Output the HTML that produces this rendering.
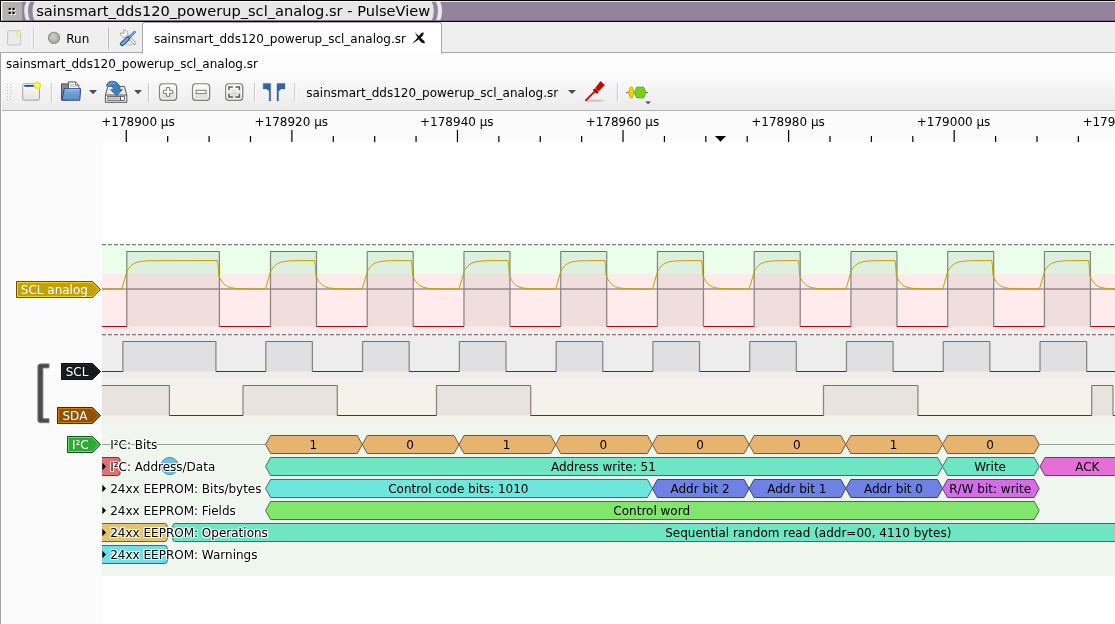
<!DOCTYPE html>
<html><head><meta charset="utf-8"><title>sainsmart_dds120_powerup_scl_analog.sr - PulseView</title>
<style>
html,body{margin:0;padding:0;}
body{width:1115px;height:624px;overflow:hidden;background:#fff;font-family:"DejaVu Sans","Liberation Sans",sans-serif;font-size:12px;color:#000;position:relative;}
.abs{position:absolute;}
#app{position:absolute;left:0;top:0;width:1115px;height:624px;overflow:hidden;will-change:transform;}
#titlebar{left:0;top:0;width:1115px;height:22px;background:#94839d;}
#title{left:36.2px;top:0;height:21px;line-height:21px;font-size:14.6px;white-space:nowrap;}
#tabrow{left:0;top:22px;width:1115px;height:30px;background:#efefef;border-bottom:1px solid #a9a9a9;}
#tab{left:142.3px;top:22px;width:299.6px;height:31.5px;background:#fff;border:1px solid #a9a9a9;border-bottom:none;border-radius:3px 3px 0 0;box-sizing:border-box;}
#main{left:0;top:53px;width:1115px;height:571px;background:#fcfcfc;}
#view{left:102px;top:142px;width:1013px;height:482px;background:#fff;}
#leftb{left:0;top:53px;width:1.3px;height:571px;background:#a3a3a3;}
#toolbar{left:2px;top:72px;width:1113px;height:38px;background:linear-gradient(#fcfcfc,#ebebeb);}
#tbline{left:2px;top:110px;width:1113px;height:1px;background:#b3b3b3;}
#ruler{left:2px;top:111px;width:1113px;height:31px;background:#fbfbfb;}
#hdr{left:2px;top:142px;width:100px;height:482px;background:#fbfbfb;}
.t{white-space:nowrap;line-height:16px;}
.rt{position:absolute;left:110.2px;white-space:nowrap;line-height:16px;height:16px;text-shadow:1px 1px 0 #fff,-1px 1px 0 #fff,1px -1px 0 #fff,-1px -1px 0 #fff;}
svg text{font-family:"DejaVu Sans","Liberation Sans",sans-serif;font-size:12px;fill:#000;}
</style></head><body>
<div id="app">
<div id="titlebar" class="abs"></div>
<div id="tabrow" class="abs"></div>
<div id="main" class="abs"></div>
<div id="tab" class="abs"></div>
<div id="toolbar" class="abs"></div>
<div id="tbline" class="abs"></div>
<div id="ruler" class="abs"></div>
<div id="hdr" class="abs"></div>
<div id="view" class="abs"></div>
<div id="leftb" class="abs"></div>
<svg class="abs" style="left:0;top:0" width="1115" height="23" viewBox="0 0 1115 23"><rect x="0" y="0" width="1115" height="22" fill="#94839d"/><path d="M26.9 0Q21.3 11 26.9 22H431.1Q436.5 11 431.1 0Z" fill="#e7e7e7"/><path d="M30.7 0Q25.3 11 30.7 22H35.2Q29.6 11 35.2 0Z" fill="#94839d"/><path d="M435.3 0Q440.7 11 435.3 22H439.6Q444.6 11 439.6 0Z" fill="#e7e7e7"/><rect x="1" y="1" width="1114" height="1" fill="#fff" fill-opacity=".75"/><rect x="1" y="1" width="21" height="20" fill="#fff"/><rect x="2.3" y="2" width="19.7" height="19" fill="#b4b2b0"/><rect x="9.7" y="8.9" width="2.1" height="2.1" fill="#fff"/><rect x="13.5" y="8.9" width="2.1" height="2.1" fill="#fff"/><rect x="9.7" y="12.9" width="2.1" height="2.1" fill="#fff"/><rect x="13.5" y="12.9" width="2.1" height="2.1" fill="#fff"/><rect x="8.7" y="7.9" width="2.1" height="2.1" fill="#000"/><rect x="12.5" y="7.9" width="2.1" height="2.1" fill="#000"/><rect x="8.7" y="11.9" width="2.1" height="2.1" fill="#000"/><rect x="12.5" y="11.9" width="2.1" height="2.1" fill="#000"/><rect x="22" y="20" width="1093" height="1" fill="#94839d" fill-opacity=".8"/><rect x="0" y="20.8" width="1115" height="1.2" fill="#000"/><rect x="0" y="0" width="1115" height="1" fill="#000"/><rect x="0" y="0" width="1" height="22" fill="#000"/></svg>
<div id="title" class="abs">sainsmart_dds120_powerup_scl_analog.sr - PulseView</div>
<div class="abs t" style="left:66.3px;top:30.5px">Run</div>
<div class="abs t" style="left:154px;top:31px">sainsmart_dds120_powerup_scl_analog.sr</div>
<div class="abs t" style="left:6px;top:55.5px">sainsmart_dds120_powerup_scl_analog.sr</div>
<div class="abs t" style="left:306.2px;top:85px">sainsmart_dds120_powerup_scl_analog.sr</div>
<svg class="abs" style="left:0;top:0" width="1115" height="624" viewBox="0 0 1115 624">
<defs><clipPath id="vc"><rect x="102" y="142" width="1013" height="482"/></clipPath></defs>
<g clip-path="url(#vc)">
<rect x="102" y="245" width="1013" height="29" fill="#ebffeb"/>
<rect x="102" y="274" width="1013" height="60.5" fill="#ffebeb"/>
<rect x="102" y="335" width="1013" height="43" fill="#ededed"/>
<rect x="102" y="378" width="1013" height="43.6" fill="#f6f1eb"/>
<rect x="102" y="421.6" width="1013" height="154.3" fill="#eef6ee"/>
<path d="M102 244.5H1115M102 334.5H1115" stroke="#000" stroke-opacity=".5" stroke-width="1.25" stroke-dasharray="4 2" fill="none"/>
<rect x="126.8" y="251.5" width="92.6" height="75.0" fill="#000" fill-opacity=".06"/>
<rect x="270.5" y="251.5" width="46" height="75.0" fill="#000" fill-opacity=".06"/>
<rect x="367.24" y="251.5" width="46" height="75.0" fill="#000" fill-opacity=".06"/>
<rect x="463.98" y="251.5" width="46" height="75.0" fill="#000" fill-opacity=".06"/>
<rect x="560.72" y="251.5" width="46" height="75.0" fill="#000" fill-opacity=".06"/>
<rect x="657.46" y="251.5" width="46" height="75.0" fill="#000" fill-opacity=".06"/>
<rect x="754.2" y="251.5" width="46" height="75.0" fill="#000" fill-opacity=".06"/>
<rect x="850.94" y="251.5" width="46" height="75.0" fill="#000" fill-opacity=".06"/>
<rect x="947.68" y="251.5" width="46" height="75.0" fill="#000" fill-opacity=".06"/>
<rect x="1044.42" y="251.5" width="46" height="75.0" fill="#000" fill-opacity=".06"/>
<path d="M102 289H1115" stroke="#000" stroke-opacity=".38" stroke-width="1.4" fill="none"/>
<path d="M126.8 251.5V326.5M219.4 251.5V326.5M270.5 251.5V326.5M316.5 251.5V326.5M367.24 251.5V326.5M413.24 251.5V326.5M463.98 251.5V326.5M509.98 251.5V326.5M560.72 251.5V326.5M606.72 251.5V326.5M657.46 251.5V326.5M703.46 251.5V326.5M754.2 251.5V326.5M800.2 251.5V326.5M850.94 251.5V326.5M896.94 251.5V326.5M947.68 251.5V326.5M993.68 251.5V326.5M1044.42 251.5V326.5M1090.42 251.5V326.5" stroke="#868686" stroke-width="1.25" fill="none"/>
<path d="M126.8 251.5H219.4M270.5 251.5H316.5M367.24 251.5H413.24M463.98 251.5H509.98M560.72 251.5H606.72M657.46 251.5H703.46M754.2 251.5H800.2M850.94 251.5H896.94M947.68 251.5H993.68M1044.42 251.5H1090.42" stroke="#00c000" stroke-width="1.15" fill="none"/>
<path d="M102 326.5H126.8M219.4 326.5H270.5M316.5 326.5H367.24M413.24 326.5H463.98M509.98 326.5H560.72M606.72 326.5H657.46M703.46 326.5H754.2M800.2 326.5H850.94M896.94 326.5H947.68M993.68 326.5H1044.42M1090.42 326.5H1115" stroke="#c00000" stroke-width="1.15" fill="none"/>
<path d="M102 289L121.5 289L122.5 286.8L126.8 271.7L127.8 269.82L128.8 268.26L129.8 266.97L130.8 265.89L131.8 265L132.8 264.25L134.8 263.12L136.8 262.34L138.8 261.8L141.8 261.29L145.8 260.93L150.8 260.73L217.5 260.6L218.2 266L218.8 275.6L219.9 278.11L220.9 279.98L221.9 281.53L223.4 283.37L224.9 284.76L226.4 285.81L228.4 286.81L231.4 287.76L234.4 288.29L239.4 288.73L244.4 288.89L249.4 289L265.2 289L266.2 286.8L270.5 271.7L271.5 269.82L272.5 268.26L273.5 266.97L274.5 265.89L275.5 265L276.5 264.25L278.5 263.12L280.5 262.34L282.5 261.8L285.5 261.29L289.5 260.93L294.5 260.73L314.6 260.6L315.3 266L315.9 275.6L317 278.11L318 279.98L319 281.53L320.5 283.37L322 284.76L323.5 285.81L325.5 286.81L328.5 287.76L331.5 288.29L336.5 288.73L341.5 288.89L346.5 289L361.94 289L362.94 286.8L367.24 271.7L368.24 269.82L369.24 268.26L370.24 266.97L371.24 265.89L372.24 265L373.24 264.25L375.24 263.12L377.24 262.34L379.24 261.8L382.24 261.29L386.24 260.93L391.24 260.73L411.34 260.6L412.04 266L412.64 275.6L413.74 278.11L414.74 279.98L415.74 281.53L417.24 283.37L418.74 284.76L420.24 285.81L422.24 286.81L425.24 287.76L428.24 288.29L433.24 288.73L438.24 288.89L443.24 289L458.68 289L459.68 286.8L463.98 271.7L464.98 269.82L465.98 268.26L466.98 266.97L467.98 265.89L468.98 265L469.98 264.25L471.98 263.12L473.98 262.34L475.98 261.8L478.98 261.29L482.98 260.93L487.98 260.73L508.08 260.6L508.78 266L509.38 275.6L510.48 278.11L511.48 279.98L512.48 281.53L513.98 283.37L515.48 284.76L516.98 285.81L518.98 286.81L521.98 287.76L524.98 288.29L529.98 288.73L534.98 288.89L539.98 289L555.42 289L556.42 286.8L560.72 271.7L561.72 269.82L562.72 268.26L563.72 266.97L564.72 265.89L565.72 265L566.72 264.25L568.72 263.12L570.72 262.34L572.72 261.8L575.72 261.29L579.72 260.93L584.72 260.73L604.82 260.6L605.52 266L606.12 275.6L607.22 278.11L608.22 279.98L609.22 281.53L610.72 283.37L612.22 284.76L613.72 285.81L615.72 286.81L618.72 287.76L621.72 288.29L626.72 288.73L631.72 288.89L636.72 289L652.16 289L653.16 286.8L657.46 271.7L658.46 269.82L659.46 268.26L660.46 266.97L661.46 265.89L662.46 265L663.46 264.25L665.46 263.12L667.46 262.34L669.46 261.8L672.46 261.29L676.46 260.93L681.46 260.73L701.56 260.6L702.26 266L702.86 275.6L703.96 278.11L704.96 279.98L705.96 281.53L707.46 283.37L708.96 284.76L710.46 285.81L712.46 286.81L715.46 287.76L718.46 288.29L723.46 288.73L728.46 288.89L733.46 289L748.9 289L749.9 286.8L754.2 271.7L755.2 269.82L756.2 268.26L757.2 266.97L758.2 265.89L759.2 265L760.2 264.25L762.2 263.12L764.2 262.34L766.2 261.8L769.2 261.29L773.2 260.93L778.2 260.73L798.3 260.6L799 266L799.6 275.6L800.7 278.11L801.7 279.98L802.7 281.53L804.2 283.37L805.7 284.76L807.2 285.81L809.2 286.81L812.2 287.76L815.2 288.29L820.2 288.73L825.2 288.89L830.2 289L845.64 289L846.64 286.8L850.94 271.7L851.94 269.82L852.94 268.26L853.94 266.97L854.94 265.89L855.94 265L856.94 264.25L858.94 263.12L860.94 262.34L862.94 261.8L865.94 261.29L869.94 260.93L874.94 260.73L895.04 260.6L895.74 266L896.34 275.6L897.44 278.11L898.44 279.98L899.44 281.53L900.94 283.37L902.44 284.76L903.94 285.81L905.94 286.81L908.94 287.76L911.94 288.29L916.94 288.73L921.94 288.89L926.94 289L942.38 289L943.38 286.8L947.68 271.7L948.68 269.82L949.68 268.26L950.68 266.97L951.68 265.89L952.68 265L953.68 264.25L955.68 263.12L957.68 262.34L959.68 261.8L962.68 261.29L966.68 260.93L971.68 260.73L991.78 260.6L992.48 266L993.08 275.6L994.18 278.11L995.18 279.98L996.18 281.53L997.68 283.37L999.18 284.76L1000.68 285.81L1002.68 286.81L1005.68 287.76L1008.68 288.29L1013.68 288.73L1018.68 288.89L1023.68 289L1039.12 289L1040.12 286.8L1044.42 271.7L1045.42 269.82L1046.42 268.26L1047.42 266.97L1048.42 265.89L1049.42 265L1050.42 264.25L1052.42 263.12L1054.42 262.34L1056.42 261.8L1059.42 261.29L1063.42 260.93L1068.42 260.73L1088.52 260.6L1089.22 266L1089.82 275.6L1090.92 278.11L1091.92 279.98L1092.92 281.53L1094.42 283.37L1095.92 284.76L1097.42 285.81L1099.42 286.81L1102.42 287.76L1105.42 288.29L1110.42 288.73L1115.42 288.89L1120.42 289" stroke="#c4a000" stroke-width="1" fill="none" stroke-linejoin="round"/>
<rect x="122.9" y="341.5" width="93" height="30.0" fill="#000" fill-opacity=".055"/>
<rect x="265.8" y="341.5" width="46.6" height="30.0" fill="#000" fill-opacity=".055"/>
<rect x="362.58" y="341.5" width="46.6" height="30.0" fill="#000" fill-opacity=".055"/>
<rect x="459.36" y="341.5" width="46.6" height="30.0" fill="#000" fill-opacity=".055"/>
<rect x="556.14" y="341.5" width="46.6" height="30.0" fill="#000" fill-opacity=".055"/>
<rect x="652.92" y="341.5" width="46.6" height="30.0" fill="#000" fill-opacity=".055"/>
<rect x="749.7" y="341.5" width="46.6" height="30.0" fill="#000" fill-opacity=".055"/>
<rect x="846.48" y="341.5" width="46.6" height="30.0" fill="#000" fill-opacity=".055"/>
<rect x="943.26" y="341.5" width="46.6" height="30.0" fill="#000" fill-opacity=".055"/>
<rect x="1040.04" y="341.5" width="46.6" height="30.0" fill="#000" fill-opacity=".055"/>
<path d="M122.9 341.5V371.5M215.9 341.5V371.5M265.8 341.5V371.5M312.4 341.5V371.5M362.58 341.5V371.5M409.18 341.5V371.5M459.36 341.5V371.5M505.96 341.5V371.5M556.14 341.5V371.5M602.74 341.5V371.5M652.92 341.5V371.5M699.52 341.5V371.5M749.7 341.5V371.5M796.3 341.5V371.5M846.48 341.5V371.5M893.08 341.5V371.5M943.26 341.5V371.5M989.86 341.5V371.5M1040.04 341.5V371.5M1086.64 341.5V371.5" stroke="#868686" stroke-width="1.25" fill="none"/>
<path d="M122.9 341.5H215.9M265.8 341.5H312.4M362.58 341.5H409.18M459.36 341.5H505.96M556.14 341.5H602.74M652.92 341.5H699.52M749.7 341.5H796.3M846.48 341.5H893.08M943.26 341.5H989.86M1040.04 341.5H1086.64" stroke="#00c000" stroke-width="1.15" fill="none"/>
<path d="M102 371.5H122.9M215.9 371.5H265.8M312.4 371.5H362.58M409.18 371.5H459.36M505.96 371.5H556.14M602.74 371.5H652.92M699.52 371.5H749.7M796.3 371.5H846.48M893.08 371.5H943.26M989.86 371.5H1040.04M1086.64 371.5H1115" stroke="#c00000" stroke-width="1.15" fill="none"/>
<rect x="102" y="385.5" width="67.4" height="30.0" fill="#000" fill-opacity=".055"/>
<rect x="243" y="385.5" width="94.3" height="30.0" fill="#000" fill-opacity=".055"/>
<rect x="436.5" y="385.5" width="94.2" height="30.0" fill="#000" fill-opacity=".055"/>
<rect x="823.5" y="385.5" width="94.4" height="30.0" fill="#000" fill-opacity=".055"/>
<rect x="1091.7" y="385.5" width="21.3" height="30.0" fill="#000" fill-opacity=".055"/>
<path d="M169.4 385.5V415.5M243 385.5V415.5M337.3 385.5V415.5M436.5 385.5V415.5M530.7 385.5V415.5M823.5 385.5V415.5M917.9 385.5V415.5M1091.7 385.5V415.5M1113 385.5V415.5" stroke="#868686" stroke-width="1.25" fill="none"/>
<path d="M102 385.5H169.4M243 385.5H337.3M436.5 385.5H530.7M823.5 385.5H917.9M1091.7 385.5H1113" stroke="#00c000" stroke-width="1.15" fill="none"/>
<path d="M169.4 415.5H243M337.3 415.5H436.5M530.7 415.5H823.5M917.9 415.5H1091.7M1113 415.5H1115" stroke="#c00000" stroke-width="1.15" fill="none"/>
<path d="M102 444.5H1115" stroke="#000" stroke-opacity=".35" stroke-width="1" fill="none"/>
<path d="M270.6 453.5L265.6 444.5L270.6 435.5H357.3L362.3 444.5L357.3 453.5Z" fill="#e6b46e" stroke="#735a37" stroke-width="1" stroke-linejoin="round"/>
<text x="313.25" y="448.9" text-anchor="middle">1</text>
<path d="M367.3 453.5L362.3 444.5L367.3 435.5H454L459 444.5L454 453.5Z" fill="#e6b46e" stroke="#735a37" stroke-width="1" stroke-linejoin="round"/>
<text x="409.95" y="448.9" text-anchor="middle">0</text>
<path d="M464 453.5L459 444.5L464 435.5H550.7L555.7 444.5L550.7 453.5Z" fill="#e6b46e" stroke="#735a37" stroke-width="1" stroke-linejoin="round"/>
<text x="506.65" y="448.9" text-anchor="middle">1</text>
<path d="M560.7 453.5L555.7 444.5L560.7 435.5H647.4L652.4 444.5L647.4 453.5Z" fill="#e6b46e" stroke="#735a37" stroke-width="1" stroke-linejoin="round"/>
<text x="603.35" y="448.9" text-anchor="middle">0</text>
<path d="M657.4 453.5L652.4 444.5L657.4 435.5H744.1L749.1 444.5L744.1 453.5Z" fill="#e6b46e" stroke="#735a37" stroke-width="1" stroke-linejoin="round"/>
<text x="700.05" y="448.9" text-anchor="middle">0</text>
<path d="M754.1 453.5L749.1 444.5L754.1 435.5H840.8L845.8 444.5L840.8 453.5Z" fill="#e6b46e" stroke="#735a37" stroke-width="1" stroke-linejoin="round"/>
<text x="796.75" y="448.9" text-anchor="middle">0</text>
<path d="M850.8 453.5L845.8 444.5L850.8 435.5H937.5L942.5 444.5L937.5 453.5Z" fill="#e6b46e" stroke="#735a37" stroke-width="1" stroke-linejoin="round"/>
<text x="893.45" y="448.9" text-anchor="middle">1</text>
<path d="M947.5 453.5L942.5 444.5L947.5 435.5H1034.2L1039.2 444.5L1034.2 453.5Z" fill="#e6b46e" stroke="#735a37" stroke-width="1" stroke-linejoin="round"/>
<text x="990.15" y="448.9" text-anchor="middle">0</text>
<path d="M270.6 475.5L265.6 466.5L270.6 457.5H937.5L942.5 466.5L937.5 475.5Z" fill="#6ee6c3" stroke="#377361" stroke-width="1" stroke-linejoin="round"/>
<text x="603.35" y="470.9" text-anchor="middle">Address write: 51</text>
<path d="M947.5 475.5L942.5 466.5L947.5 457.5H1034.2L1039.2 466.5L1034.2 475.5Z" fill="#6ee6c3" stroke="#377361" stroke-width="1" stroke-linejoin="round"/>
<text x="990.15" y="470.9" text-anchor="middle">Write</text>
<path d="M1045 475.5L1040 466.5L1045 457.5H1130L1135 466.5L1130 475.5Z" fill="#e66ed7" stroke="#73376b" stroke-width="1" stroke-linejoin="round"/>
<text x="1087.3" y="470.9" text-anchor="middle">ACK</text>
<path d="M97 475.5L92 466.5L97 457.5H117.8Q120.2 457.5 120.2 460.9V472.1Q120.2 475.5 117.8 475.5Z" fill="#e66e73" stroke="#733739" stroke-width="1" stroke-linejoin="round"/>
<path d="M270.6 497.5L265.6 488.5L270.6 479.5H647.4L652.4 488.5L647.4 497.5Z" fill="#6ee6dc" stroke="#37736e" stroke-width="1" stroke-linejoin="round"/>
<text x="458.3" y="492.9" text-anchor="middle">Control code bits: 1010</text>
<path d="M657.4 497.5L652.4 488.5L657.4 479.5H744.1L749.1 488.5L744.1 497.5Z" fill="#6e82e6" stroke="#374173" stroke-width="1" stroke-linejoin="round"/>
<text x="700.05" y="492.9" text-anchor="middle">Addr bit 2</text>
<path d="M754.1 497.5L749.1 488.5L754.1 479.5H840.8L845.8 488.5L840.8 497.5Z" fill="#6e82e6" stroke="#374173" stroke-width="1" stroke-linejoin="round"/>
<text x="796.75" y="492.9" text-anchor="middle">Addr bit 1</text>
<path d="M850.8 497.5L845.8 488.5L850.8 479.5H937.5L942.5 488.5L937.5 497.5Z" fill="#6e82e6" stroke="#374173" stroke-width="1" stroke-linejoin="round"/>
<text x="893.45" y="492.9" text-anchor="middle">Addr bit 0</text>
<path d="M947.5 497.5L942.5 488.5L947.5 479.5H1034.2L1039.2 488.5L1034.2 497.5Z" fill="#d26ee6" stroke="#693773" stroke-width="1" stroke-linejoin="round"/>
<text x="990.15" y="492.9" text-anchor="middle">R/W bit: write</text>
<path d="M270.6 519.5L265.6 510.5L270.6 501.5H1034.2L1039.2 510.5L1034.2 519.5Z" fill="#82e66e" stroke="#417337" stroke-width="1" stroke-linejoin="round"/>
<text x="651.7" y="514.9" text-anchor="middle">Control word</text>
<path d="M97 541.5L92 532.5L97 523.5H164.9Q167.3 523.5 167.3 526.9V538.1Q167.3 541.5 164.9 541.5Z" fill="#e6c46e" stroke="#736237" stroke-width="1" stroke-linejoin="round"/>
<path d="M172.6 538.1V526.9Q172.6 523.5 175 523.5H1130L1135 532.5L1130 541.5H175Q172.6 541.5 172.6 538.1Z" fill="#6ee6c3" stroke="#377361" stroke-width="1" stroke-linejoin="round"/>
<text x="808.3" y="536.9" text-anchor="middle">Sequential random read (addr=00, 4110 bytes)</text>
<path d="M97 563.5L92 554.5L97 545.5H164.9Q167.3 545.5 167.3 548.9V560.1Q167.3 563.5 164.9 563.5Z" fill="#6edfe6" stroke="#376f73" stroke-width="1" stroke-linejoin="round"/>
<circle cx="169.7" cy="466" r="8.6" fill="#6ebfe6" stroke="#4b8fb3" stroke-width="1"/>
<path d="M102.3 462.8L106 466.5L102.3 470.2Z" fill="#000"/><path d="M102.3 484.8L106 488.5L102.3 492.2Z" fill="#000"/><path d="M102.3 506.8L106 510.5L102.3 514.2Z" fill="#000"/><path d="M102.3 528.8L106 532.5L102.3 536.2Z" fill="#000"/><path d="M102.3 550.8L106 554.5L102.3 558.2Z" fill="#000"/>
</g>
<path d="M126.3 130V142M167.69 136V142M209.09 136V142M250.49 136V142M291.88 130V142M333.27 136V142M374.67 136V142M416.06 136V142M457.46 130V142M498.86 136V142M540.25 136V142M581.64 136V142M623.04 130V142M664.43 136V142M705.83 136V142M747.22 136V142M788.62 130V142M830.01 136V142M871.41 136V142M912.81 136V142M954.2 130V142M995.6 136V142M1036.99 136V142M1078.38 136V142" stroke="#000" stroke-width="1.2" fill="none"/>
<path d="M715 136H726L720.5 141.7Z" fill="#000"/>
<text x="101.2" y="125.6">+178900 µs</text><text x="254.48" y="125.6">+178920 µs</text><text x="420.06" y="125.6">+178940 µs</text><text x="585.64" y="125.6">+178960 µs</text><text x="751.22" y="125.6">+178980 µs</text><text x="916.8" y="125.6">+179000 µs</text><text x="1082.38" y="125.6">+179020 µs</text>
<defs><linearGradient id="gb" x1="0" y1="0" x2="0" y2="1"><stop offset="0" stop-color="#fdfdfd"/><stop offset=".5" stop-color="#f1f1f1"/><stop offset=".55" stop-color="#e6e6e6"/><stop offset="1" stop-color="#dadada"/></linearGradient><linearGradient id="gn" x1="0" y1="0" x2="0" y2="1"><stop offset="0" stop-color="#ffffff"/><stop offset="1" stop-color="#e2e2e2"/></linearGradient><linearGradient id="gf" x1="0" y1="0" x2="0" y2="1"><stop offset="0" stop-color="#7fa9dc"/><stop offset="1" stop-color="#5b8dcb"/></linearGradient><radialGradient id="gr" cx=".45" cy=".4" r=".6"><stop offset="0" stop-color="#d2d2cd"/><stop offset="1" stop-color="#a4a49f"/></radialGradient><radialGradient id="gy"><stop offset="0" stop-color="#fff"/><stop offset=".14" stop-color="#fffbd0"/><stop offset=".4" stop-color="#f3ea3c"/><stop offset=".82" stop-color="#f0e636"/><stop offset="1" stop-color="#f0e636" stop-opacity="0"/></radialGradient><radialGradient id="gy2"><stop offset="0" stop-color="#fff"/><stop offset=".2" stop-color="#fbf8d0"/><stop offset=".5" stop-color="#ece584"/><stop offset=".8" stop-color="#ebe58a"/><stop offset="1" stop-color="#ebe58a" stop-opacity="0"/></radialGradient></defs><rect x="7.6" y="30.8" width="13" height="14.2" rx="1.6" fill="#ebebeb" stroke="#c6c6c6" stroke-width="1.1"/><circle cx="19" cy="33.2" r="2.9" fill="url(#gy2)"/><path d="M33.2 27.5V49" stroke="#a5a5a5" stroke-width="1.1"/><path d="M32.2 27.5V49M34.2 27.5V49" stroke="#fbfbfb" stroke-width="1"/><path d="M108.4 27.5V49" stroke="#a5a5a5" stroke-width="1.1"/><path d="M107.4 27.5V49M109.4 27.5V49" stroke="#fbfbfb" stroke-width="1"/><circle cx="54" cy="37.9" r="5.6" fill="url(#gr)" stroke="#8d8d88" stroke-width="1.1"/><path d="M134.6 43L126 34.6" stroke="#a8a8a8" stroke-width="3.3" stroke-linecap="round" fill="none"/><path d="M134.6 43L126 34.6" stroke="#f4f4f4" stroke-width="1.6" stroke-linecap="round" fill="none"/><path d="M120.56 32.96L123.78 33.18L123.56 29.96A3.7 3.7 0 1 1 120.56 32.96Z" fill="#f4f4f4" stroke="#a2a2a2" stroke-width=".95" stroke-linejoin="round"/><ellipse cx="130" cy="44.6" rx="5" ry="1.1" fill="#000" fill-opacity=".12"/><path d="M128.6 38.2L134.6 32.2" stroke="#4a78ba" stroke-width="2.6" stroke-linecap="round" fill="none"/><path d="M129 37.8L134.4 32.4" stroke="#c4d6ee" stroke-width="1" stroke-linecap="round" stroke-dasharray="1.3 .9" fill="none"/><path d="M122.2 43.9L127.8 38.6" stroke="#2a5aa0" stroke-width="4.6" stroke-linecap="round" fill="none"/><path d="M122.4 43.7L127.6 38.8" stroke="#8fa9cf" stroke-width="2.2" stroke-linecap="round" fill="none"/><path d="M423.3 32.2Q424.5 33.8 422 36.4Q417.3 40.9 412.1 43.7Q416.2 39.5 419.2 35.5Q421.2 32.5 423.3 32.2Z" fill="#111"/><path d="M414.9 32.3Q418.6 36.2 421.5 38.6Q424.6 40.7 424.9 43Q423.5 43.8 421.1 42.2Q418.3 39.6 414.9 32.3Z" fill="#111"/><rect x="6.9" y="84" width="1" height="1" fill="#bdbdbd"/><rect x="10.1" y="84" width="1" height="1" fill="#bdbdbd"/><rect x="6.9" y="87" width="1" height="1" fill="#bdbdbd"/><rect x="10.1" y="87" width="1" height="1" fill="#bdbdbd"/><rect x="6.9" y="90" width="1" height="1" fill="#bdbdbd"/><rect x="10.1" y="90" width="1" height="1" fill="#bdbdbd"/><rect x="6.9" y="93" width="1" height="1" fill="#bdbdbd"/><rect x="10.1" y="93" width="1" height="1" fill="#bdbdbd"/><rect x="6.9" y="96" width="1" height="1" fill="#bdbdbd"/><rect x="10.1" y="96" width="1" height="1" fill="#bdbdbd"/><rect x="6.9" y="99" width="1" height="1" fill="#bdbdbd"/><rect x="10.1" y="99" width="1" height="1" fill="#bdbdbd"/><rect x="22.7" y="83.7" width="16.8" height="16.5" rx="1.6" fill="url(#gn)" stroke="#a3a39d" stroke-width="1"/><rect x="24.3" y="85" width="11.5" height="1.8" fill="#204a87"/><circle cx="37.5" cy="85.5" r="4.3" fill="url(#gy)"/><path d="M51.4 83V101.8" stroke="#c3c3c3" stroke-width="1"/><path d="M52.4 83V101.8" stroke="#fff" stroke-width="1"/><path d="M61.5 83.9H68.5V100H61.5Z" fill="#8b8b8b" stroke="#4f4f4f" stroke-width="1"/><path d="M68.4 81.9H75.6L78.8 85.2V90H68.4Z" fill="#fbfbfb" stroke="#555" stroke-width="1"/><path d="M75.6 81.9V85.2H78.8" fill="#ddd" stroke="#555" stroke-width=".8"/><path d="M70 84.3H74M70 86.3H76.5" stroke="#aaa" stroke-width=".9"/><path d="M64.2 88.7H80.6L79.8 100.2H62Z" fill="url(#gf)" stroke="#204a87" stroke-width="1" stroke-linejoin="round"/><path d="M65 89.8H79.6" stroke="#a9c6ea" stroke-width="1" fill="none"/><path d="M89 90.1H97.1L93.05 94.2Z" fill="#4d4d4d"/><path d="M107.9 86.4H124.3L126.8 95V102.3H105.4V95Z" fill="#ececec" stroke="#555" stroke-width="1" stroke-linejoin="round"/><path d="M105.6 95H126.6" stroke="#555" stroke-width="1"/><rect x="107.9" y="96.4" width="16.4" height="3.9" fill="#fff" stroke="#555" stroke-width=".9"/><rect x="108.8" y="97.3" width="10.6" height="2.1" fill="#b5b5b5"/><path d="M120.4 96.4V100.3" stroke="#444" stroke-width="1"/><path d="M106.6 86.2Q106.6 81.8 111.6 81.3Q117.6 81 119.8 86.6L120 89.7H122.4L116.6 95.6L110.6 89.7H113.4Q113.4 86 110.6 85.2Q108 84.8 106.6 86.2Z" fill="#3f7fbe" stroke="#2c5f98" stroke-width=".9" stroke-linejoin="round"/><path d="M108 84.4Q111 82.2 114.6 83.4" stroke="#8db7e0" stroke-width="1" fill="none"/><path d="M134.1 90.1H142L138.05 94.2Z" fill="#4d4d4d"/><path d="M148.6 83V101.8" stroke="#c3c3c3" stroke-width="1"/><path d="M149.6 83V101.8" stroke="#fff" stroke-width="1"/><rect x="159.4" y="84.7" width="17.4" height="16.4" rx="3.4" fill="#000" fill-opacity=".13"/><rect x="159.6" y="83.8" width="17" height="16.4" rx="3.2" fill="url(#gb)" stroke="#83837d" stroke-width="1.35"/><rect x="160.8" y="85" width="14.6" height="13.999999999999998" rx="2.1" fill="none" stroke="#fff" stroke-opacity=".85" stroke-width="1"/><path d="M166.6 87.5H169.6V90.3H172.8V93.3H169.6V96.3H166.6V93.3H163.4V90.3H166.6Z" fill="#fff" stroke="#7a7a76" stroke-width="1" stroke-linejoin="round"/><rect x="192.4" y="84.7" width="17.4" height="16.4" rx="3.4" fill="#000" fill-opacity=".13"/><rect x="192.6" y="83.8" width="17" height="16.4" rx="3.2" fill="url(#gb)" stroke="#83837d" stroke-width="1.35"/><rect x="193.8" y="85" width="14.6" height="13.999999999999998" rx="2.1" fill="none" stroke="#fff" stroke-opacity=".85" stroke-width="1"/><rect x="196.2" y="90.3" width="9.8" height="3.1" fill="#fff" stroke="#7a7a76" stroke-width="1"/><rect x="225.5" y="84.7" width="17.4" height="16.4" rx="3.4" fill="#000" fill-opacity=".13"/><rect x="225.7" y="83.8" width="17" height="16.4" rx="3.2" fill="url(#gb)" stroke="#83837d" stroke-width="1.35"/><rect x="226.9" y="85" width="14.6" height="13.999999999999998" rx="2.1" fill="none" stroke="#fff" stroke-opacity=".85" stroke-width="1"/><circle cx="234.2" cy="92" r="3" fill="#000" fill-opacity=".06"/><path d="M228.9 90.3V87H232.9M235.5 87H239.4V90.3M239.4 93.7V97H235.5M232.9 97H228.9V93.7" fill="none" stroke="#5e5e5a" stroke-width="1.5"/><path d="M254.6 83V101.8" stroke="#c3c3c3" stroke-width="1"/><path d="M255.6 83V101.8" stroke="#fff" stroke-width="1"/><path d="M263.2 83.4H270.7V100.9H269.2V91.2L266.6 88.9H263.2Z" fill="#3465a4" stroke="#204a87" stroke-width=".3" stroke-linejoin="round"/><path d="M285 83.4H277V100.9H278.5V91.2L281.1 88.9H285Z" fill="#3465a4" stroke="#204a87" stroke-width=".3" stroke-linejoin="round"/><path d="M294.8 83V101.8" stroke="#c3c3c3" stroke-width="1"/><path d="M295.8 83V101.8" stroke="#fff" stroke-width="1"/><path d="M567.9 90H576.1L572 94Z" fill="#4d4d4d"/><ellipse cx="595" cy="100.7" rx="9" ry="1.3" fill="#000" fill-opacity=".16"/><path d="M585.4 100.9L594.5 91.6" stroke="#cc0000" stroke-width="1.7" fill="none"/><path d="M593 90.6L595.4 88.2L598.4 91.4L596.2 93.6Z" fill="#cc0000"/><path d="M595.2 88L600.6 81L604.8 84.9L598.6 91.4Z" fill="#cc0000"/><path d="M593.6 89L597.8 93.2" stroke="#a40000" stroke-width="1.6"/><path d="M617.4 83V101.8" stroke="#c3c3c3" stroke-width="1"/><path d="M618.4 83V101.8" stroke="#fff" stroke-width="1"/><path d="M625.9 92.6H648" stroke="#666" stroke-width="1"/><path d="M628.3 92.5L630.3 87.2H632.4L634.4 92.5L632.4 97.8H630.3Z" fill="#edd400" stroke="#c4a000" stroke-width=".8" stroke-linejoin="round"/><path d="M634.4 92.5L636.7 87.2H643.7L645.9 92.5L643.7 97.8H636.7Z" fill="#73d216" stroke="#4e9a06" stroke-width=".8" stroke-linejoin="round"/><path d="M645.2 101.4H651L648.1 104.2Z" fill="#4d4d4d"/>
<polygon points="16.5,281.5 92.5,281.5 100.5,289.5 92.5,297.5 16.5,297.5" fill="#c4a000"/><polygon points="17.5,282.5 92.1,282.5 99.1,289.5 92.1,296.5 17.5,296.5" fill="none" stroke="#f2d31b" stroke-width="1"/><polygon points="16.5,281.5 92.5,281.5 100.5,289.5 92.5,297.5 16.5,297.5" fill="none" stroke="#625000" stroke-width="1"/><text x="20.8" y="293.7" style="fill:#fff">SCL analog</text><polygon points="61.5,363.5 92.5,363.5 100.5,371.5 92.5,379.5 61.5,379.5" fill="#16191a"/><polygon points="62.5,364.5 92.1,364.5 99.1,371.5 92.1,378.5 62.5,378.5" fill="none" stroke="#23282a" stroke-width="1"/><polygon points="61.5,363.5 92.5,363.5 100.5,371.5 92.5,379.5 61.5,379.5" fill="none" stroke="#0b0c0d" stroke-width="1"/><text x="65.7" y="376" style="fill:#fff">SCL</text><polygon points="57.5,407.5 92.5,407.5 100.5,415.5 92.5,423.5 57.5,423.5" fill="#8f5202"/><polygon points="58.5,408.5 92.1,408.5 99.1,415.5 92.1,422.5 58.5,422.5" fill="none" stroke="#d67b03" stroke-width="1"/><polygon points="57.5,407.5 92.5,407.5 100.5,415.5 92.5,423.5 57.5,423.5" fill="none" stroke="#472901" stroke-width="1"/><text x="62.5" y="419.7" style="fill:#fff">SDA</text><polygon points="67.5,436.5 92.5,436.5 100.5,444.5 92.5,452.5 67.5,452.5" fill="#30a838"/><polygon points="68.5,437.5 92.1,437.5 99.1,444.5 92.1,451.5 68.5,451.5" fill="none" stroke="#5ae666" stroke-width="1"/><polygon points="67.5,436.5 92.5,436.5 100.5,444.5 92.5,452.5 67.5,452.5" fill="none" stroke="#18541c" stroke-width="1"/><text x="72" y="448.7" style="fill:#fff">I²C</text><path d="M49 363.9H40.4Q37.9 363.9 37.9 366.4V420.2Q37.9 422.7 40.4 422.7H49V418.7H42.9V367.9H49Z" fill="#4a4a4a" stroke="#7d7d7d" stroke-width="1" stroke-linejoin="round"/>
</svg>
<div class="rt" style="top:436.5px">I²C: Bits</div>
<div class="rt" style="top:458.5px">I²C: Address/Data</div>
<div class="rt" style="top:480.5px">24xx EEPROM: Bits/bytes</div>
<div class="rt" style="top:502.5px">24xx EEPROM: Fields</div>
<div class="rt" style="top:524.5px">24xx EEPROM: Operations</div>
<div class="rt" style="top:546.5px">24xx EEPROM: Warnings</div>

</div>
</body></html>
